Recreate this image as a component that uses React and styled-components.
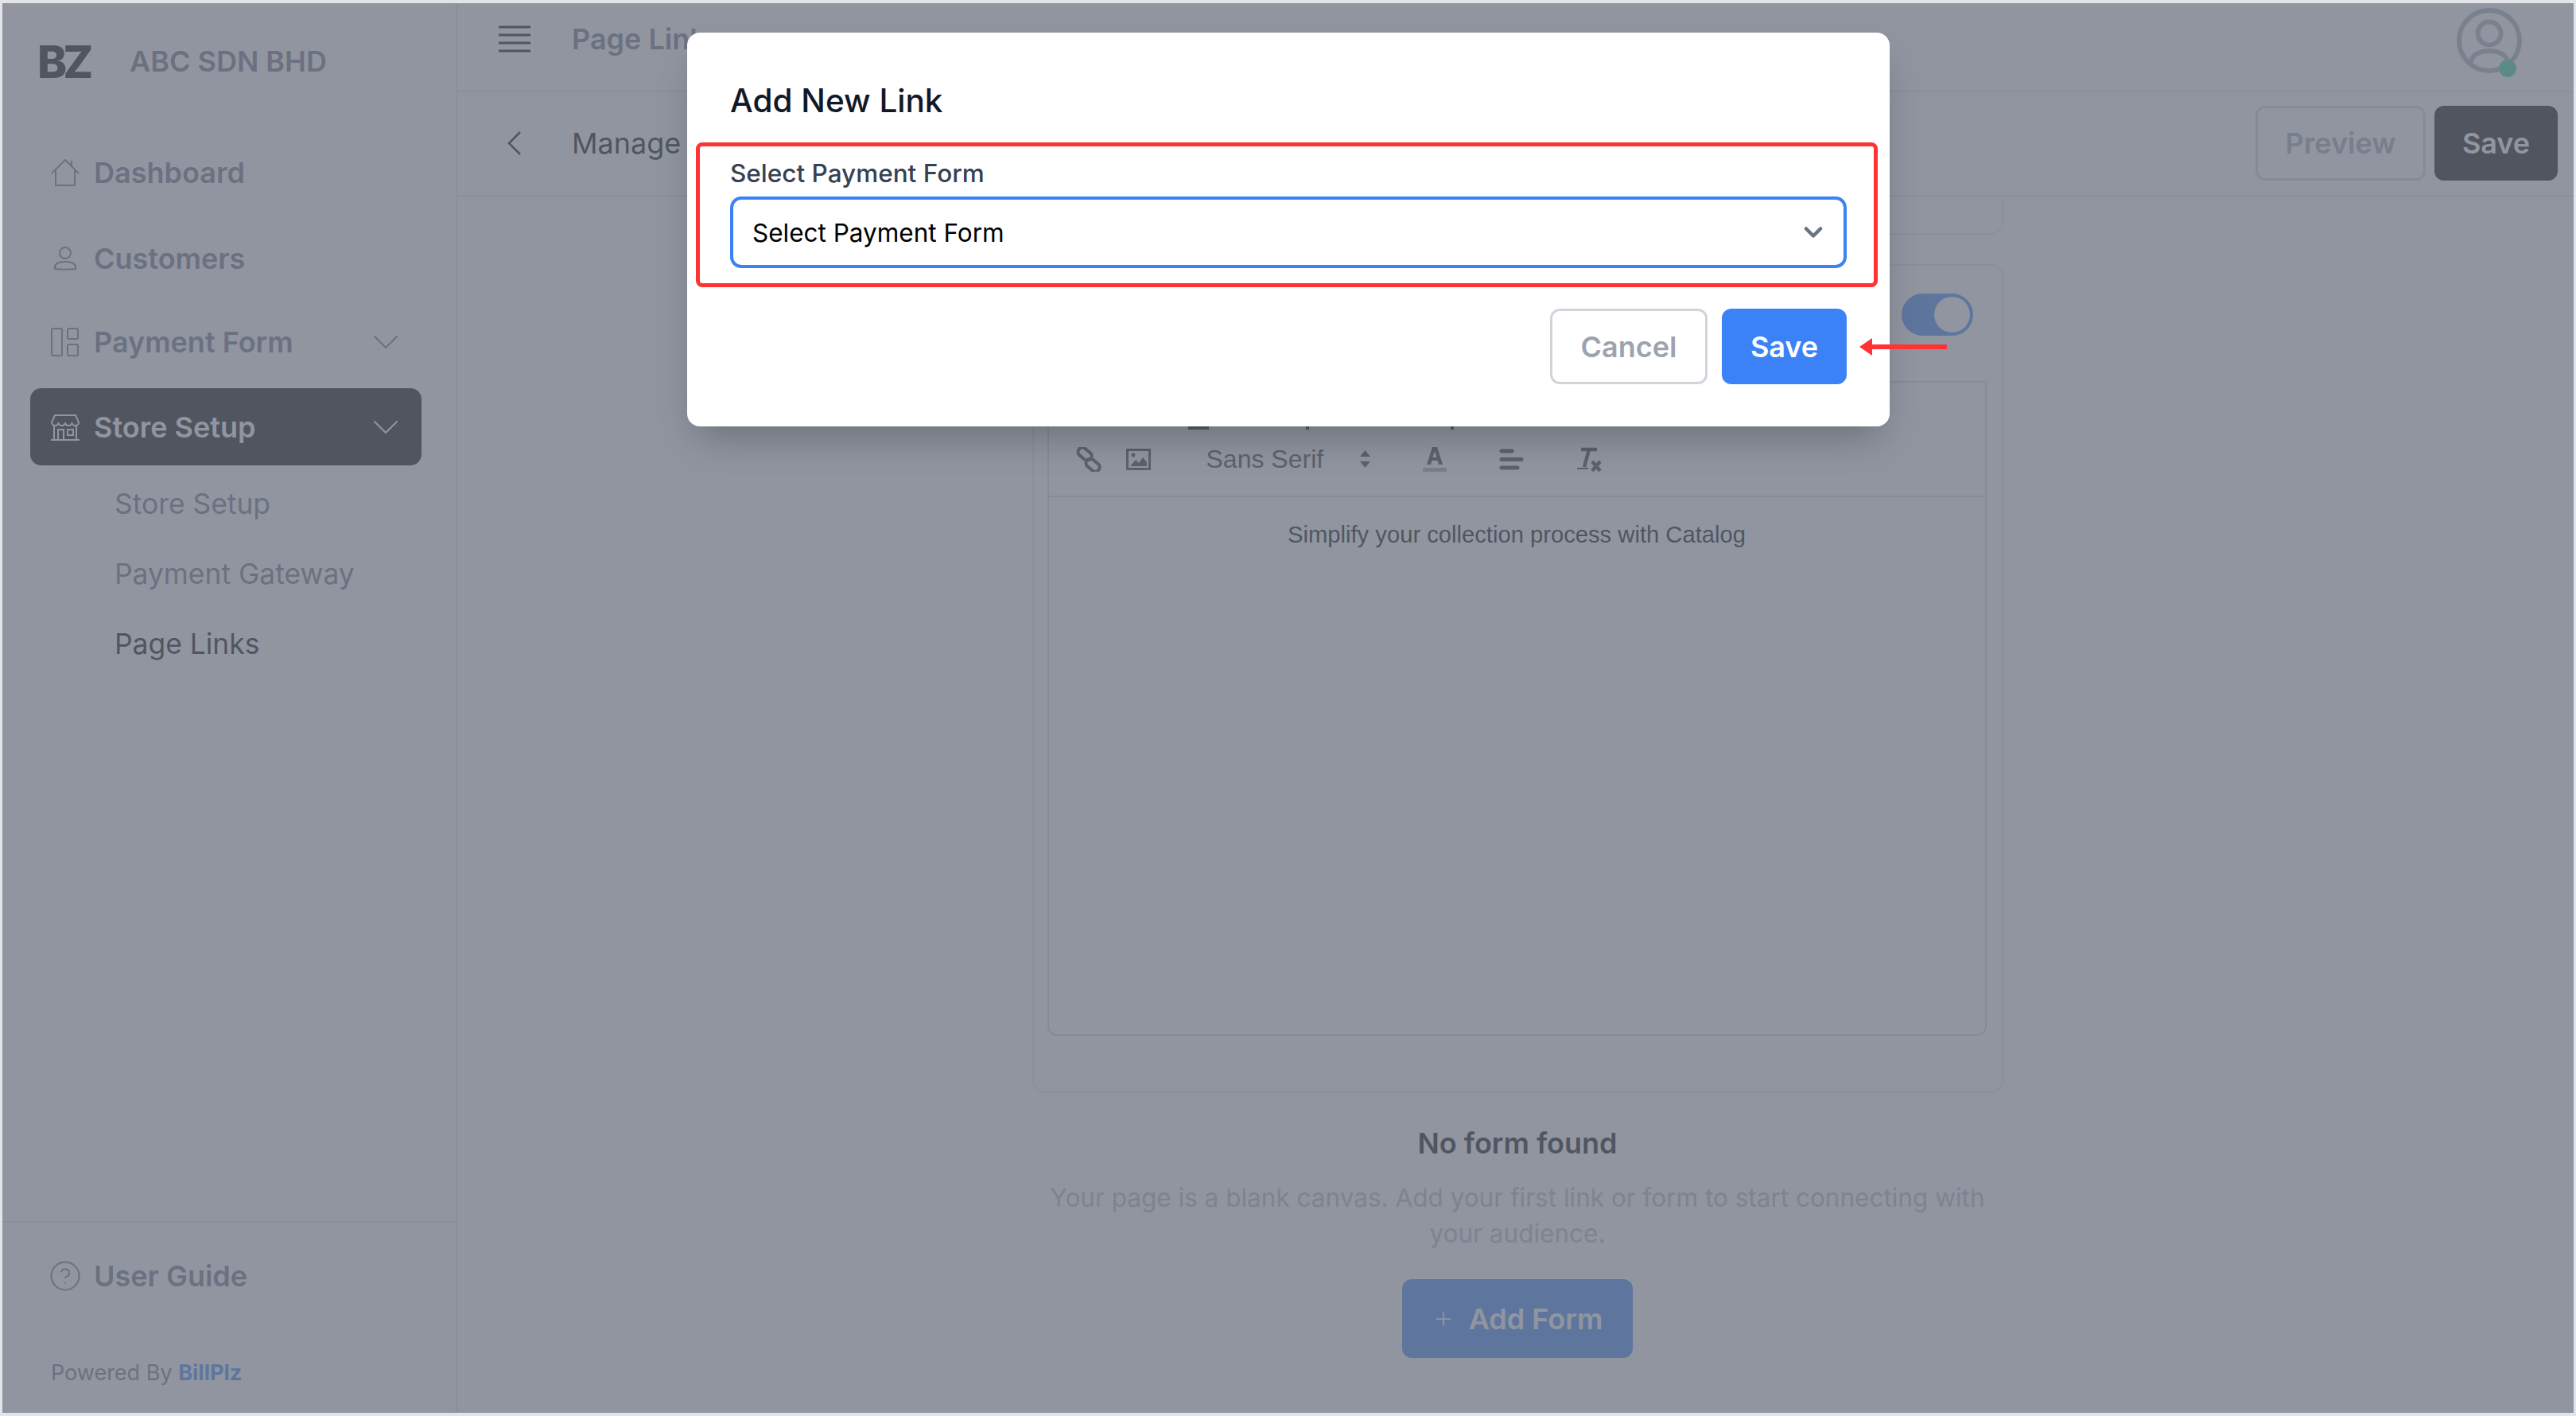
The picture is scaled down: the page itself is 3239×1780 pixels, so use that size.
import React from 'react'
import styled, { createGlobalStyle } from 'styled-components'
import { ChevronDown, Plus, CircleHelp } from 'lucide-react'

const GlobalStyle = createGlobalStyle`
  html, body {
    margin: 0;
    padding: 0;
    background: #e5e7eb;
    font-family: Inter, "Liberation Sans", sans-serif;
  }
  * {
    box-sizing: border-box;
  }
`

const Frame = styled.div`
  position: relative;
  width: 3239px;
  height: 1780px;
  border: 3px solid #e3e4e8;
  border-top-width: 4px;
  border-bottom-width: 4px;
  background: #ffffff;
  display: flex;
  overflow: hidden;
`

const Sidebar = styled.aside`
  width: 572px;
  flex: none;
  border-right: 2px solid #e5e7eb;
  display: flex;
  flex-direction: column;
`

const Brand = styled.div`
  height: 148px;
  padding: 0 0 0 44px;
  display: flex;
  align-items: center;
  gap: 52px;
`

const BrandMark = styled.span`
  font-size: 56px;
  font-weight: 800;
  color: #000000;
  letter-spacing: -5px;
  width: 64px;
`

const BrandName = styled.span`
  font-size: 36px;
  font-weight: 600;
  color: #6b7280;
  margin-top: -2px;
`

const Nav = styled.nav`
  flex: 1;
  padding: 12px 43px 0 35px;
  display: flex;
  flex-direction: column;
`

const NavItem = styled.div`
  height: ${p => p.$h || 106}px;
  margin-bottom: ${p => p.$mb || 0}px;
  border-radius: 14px;
  padding: 0 17px 0 26px;
  display: flex;
  align-items: center;
  gap: 18px;
  font-size: 36px;
  font-weight: 600;
  color: ${p => (p.$active ? '#ffffff' : '#6b7280')};
  background: ${p => (p.$active ? '#000000' : 'transparent')};
  svg {
    flex: none;
  }
`

const NavLabel = styled.span`
  flex: 1;
`

const SubItem = styled.div`
  height: 88px;
  padding-left: 106px;
  display: flex;
  align-items: center;
  font-size: 35.4px;
  color: ${p => (p.$active ? '#000000' : '#6b7280')};
`

const SideFooter = styled.div`
  border-top: 2px solid #e5e7eb;
  height: 241px;
  padding: 0 58px;
  display: flex;
  flex-direction: column;
`

const GuideRow = styled.div`
  height: 134px;
  display: flex;
  align-items: center;
  gap: 15px;
  font-size: 36px;
  font-weight: 600;
  color: #6b7280;
`

const Powered = styled.div`
  margin-top: 38px;
  margin-left: 3px;
  font-size: 27px;
  color: #6b7280;
  b {
    color: #3b82f6;
    font-weight: 700;
  }
`

const Main = styled.main`
  flex: 1;
  min-width: 0;
  display: flex;
  flex-direction: column;
`

const Header = styled.header`
  height: 112px;
  flex: none;
  border-bottom: 2px solid #e5e7eb;
  padding: 0 63px 20px 52px;
  display: flex;
  align-items: center;
`

const PageTitle = styled.h1`
  margin: 0 0 0 52px;
  flex: 1;
  font-size: 36px;
  font-weight: 600;
  color: #6b7280;
`

const AvatarSlot = styled.div`
  align-self: flex-start;
  margin-top: 6px;
  display: flex;
`

const SubHeader = styled.div`
  height: 131px;
  flex: none;
  border-bottom: 2px solid #e5e7eb;
  padding: 0 20px 2px 63px;
  display: flex;
  align-items: center;
  gap: 11px;
`

const SubTitle = styled.span`
  margin-left: 52px;
  flex: 1;
  font-size: 36px;
  color: #000000;
`

const TopButton = styled.button`
  height: 94px;
  width: ${p => p.$w}px;
  border-radius: 12px;
  font: 600 36px Inter, sans-serif;
  border: ${p => (p.$dark ? '0' : '3px solid #d1d5db')};
  background: ${p => (p.$dark ? '#000000' : '#ffffff')};
  color: ${p => (p.$dark ? '#ffffff' : '#9ca3af')};
`

const Content = styled.div`
  flex: 1;
  overflow: hidden;
  display: flex;
  flex-direction: column;
  align-items: center;
  padding-left: 5px;
`

const Column = styled.div`
  width: 1221px;
`

const StubCard = styled.div`
  height: 48px;
  border: 2px solid #e5e7eb;
  border-top: 0;
  border-radius: 0 0 16px 16px;
`

const EditorCard = styled.section`
  margin-top: 37px;
  height: 1042px;
  border: 2px solid #e5e7eb;
  border-radius: 16px;
  padding: 0 19px 0 17px;
`

const ToggleRow = styled.div`
  height: 145px;
  padding: 35px 17px 0 0;
  display: flex;
  justify-content: flex-end;
  align-items: flex-start;
`

const Toggle = styled.div`
  width: 90px;
  height: 53px;
  border-radius: 27px;
  background: #3b82f6;
  padding: 4px;
  display: flex;
  justify-content: flex-end;
`

const Knob = styled.div`
  width: 45px;
  height: 45px;
  border-radius: 50%;
  background: #ffffff;
`

const Toolbar = styled.div`
  height: 146px;
  border: 2px solid #d1d5db;
  display: flex;
  flex-direction: column;
  justify-content: flex-end;
`

const ToolRow = styled.div`
  height: 50px;
  margin-bottom: 21px;
  padding-left: 34px;
  display: flex;
  align-items: center;
`

const HiddenRow = styled.div`
  height: 4px;
  margin-bottom: 12px;
  padding-left: 175px;
  display: flex;
`

const HiddenMark = styled.span`
  width: ${p => p.$w}px;
  height: 4px;
  margin-left: ${p => p.$ml || 0}px;
  background: #222222;
`

const FontPick = styled.span`
  margin-left: 70px;
  font: 32px "Liberation Sans", Arial, sans-serif;
  color: #333333;
  width: 172px;
`

const ToolGap = styled.span`
  display: inline-flex;
  margin-left: ${p => p.$ml}px;
`

const EditorBody = styled.div`
  height: 677px;
  border: 2px solid #d1d5db;
  border-top: 0;
  border-radius: 0 0 12px 12px;
  padding-top: 31px;
  text-align: center;
  font: 29.2px "Liberation Sans", Arial, sans-serif;
  color: #000000;
`

const Empty = styled.div`
  margin-top: 41px;
  text-align: center;
`

const EmptyTitle = styled.h2`
  margin: 0;
  font-size: 36px;
  line-height: 44px;
  font-weight: 600;
  color: #000000;
`

const EmptyText = styled.p`
  margin: 24px 0 0;
  font-size: 31.5px;
  line-height: 45px;
  color: #b4b8c0;
`

const AddButton = styled.button`
  margin-top: 35px;
  width: 290px;
  height: 99px;
  border: 0;
  border-radius: 12px;
  background: #3b82f6;
  color: #ffffff;
  font: 600 36px Inter, sans-serif;
  display: inline-flex;
  align-items: center;
  justify-content: center;
  gap: 18px;
`

const Overlay = styled.div`
  position: absolute;
  inset: 0;
  background: rgba(107, 114, 128, 0.75);
  display: flex;
  justify-content: center;
  align-items: flex-start;
  padding: 37px 0 0 1px;
`

const Modal = styled.div`
  position: relative;
  width: 1512px;
  height: 495px;
  background: #ffffff;
  border-radius: 16px;
  box-shadow: 0 25px 50px -12px rgba(0, 0, 0, 0.25);
  padding: 0 54px;
  display: flex;
  flex-direction: column;
`

const ModalTitle = styled.h3`
  margin: 56px 0 0;
  font-size: 40.5px;
  line-height: 60px;
  font-weight: 500;
  color: #111827;
`

const Field = styled.div`
  position: relative;
  margin-top: 41px;
`

const Highlight = styled.div`
  position: absolute;
  top: -19px;
  bottom: -24px;
  left: -43px;
  right: -39px;
  border: 5px solid #ff3333;
  border-radius: 8px;
  pointer-events: none;
`

const FieldLabel = styled.label`
  display: block;
  font-size: 31.5px;
  line-height: 40px;
  font-weight: 500;
  color: #374151;
`

const SelectBox = styled.div`
  margin-top: 9px;
  height: 90px;
  border: 4px solid #3b82f6;
  border-radius: 14px;
  padding: 0 20px 0 24px;
  display: flex;
  align-items: center;
  justify-content: space-between;
  font-size: 31.5px;
  font-weight: 400;
  color: #000000;
`

const Actions = styled.div`
  margin-top: 51px;
  display: flex;
  justify-content: flex-end;
  gap: 18px;
`

const ModalButton = styled.button`
  height: 95px;
  width: ${p => p.$w}px;
  border-radius: 12px;
  font: 600 36px Inter, sans-serif;
  border: ${p => (p.$primary ? '0' : '3px solid #d1d5db')};
  background: ${p => (p.$primary ? '#3b82f6' : '#ffffff')};
  color: ${p => (p.$primary ? '#ffffff' : '#9ca3af')};
`

const Arrow = styled.svg`
  position: absolute;
  left: 1474px;
  top: 383px;
`

const AvatarIcon = () => (
  <svg width="84" height="90" viewBox="0 0 84 90" fill="none" stroke="#a8adb8" strokeWidth="6">
    <circle cx="41" cy="41" r="38" />
    <circle cx="41" cy="32" r="14.500" />
    <path d="M17 70c2-11 12-16 24-16s22 5 24 16" />
    <circle cx="64" cy="76" r="11" fill="#34d399" stroke="none" />
  </svg>
)

const BurgerIcon = () => (
  <svg width="40" height="34" viewBox="0 0 40 34" stroke="#000" strokeWidth="3">
    <path d="M0 2h40M0 12h40M0 22h40M0 32h40" />
  </svg>
)

const BackIcon = () => (
  <svg width="18" height="30" viewBox="0 0 18 30" fill="none" stroke="#000" strokeWidth="2.500">
    <path d="M16 1L2 15l14 14" />
  </svg>
)

const HomeIcon = () => (
  <svg width="36" height="36" viewBox="0 0 36 36" fill="none" stroke="#6b7280" strokeWidth="2" strokeLinejoin="round">
    <path d="M1 19L18 2l17 17M6 15v19h24V15M26 3v8" />
  </svg>
)

const PersonIcon = () => (
  <svg width="36" height="30" viewBox="0 0 36 30" fill="none" stroke="#6b7280" strokeWidth="2">
    <circle cx="18" cy="8" r="7" />
    <path d="M5 28v-2c0-5 6-7 13-7s13 2 13 7v2c-8 1-18 1-26 0z" />
  </svg>
)

const PanelsIcon = () => (
  <svg width="36" height="36" viewBox="0 0 36 36" fill="none" stroke="#6b7280" strokeWidth="2">
    <rect x="1" y="1" width="13" height="34" rx="1.500" />
    <rect x="21" y="1" width="13" height="13" rx="1.500" />
    <rect x="21" y="21" width="13" height="14" rx="1.500" />
  </svg>
)

const StoreIcon = () => (
  <svg width="36" height="34" viewBox="0 0 36 34" fill="none" stroke="#ffffff" strokeWidth="2">
    <path d="M5 2h26l4 9c0 3-3 4-4.500 4s-4-1-4-4c0 3-2.500 4-4.300 4S18 14 18 11c0 3-2.500 4-4.200 4S9.500 14 9.500 11c0 3-2.500 4-4 4S1 14 1 11z" />
    <path d="M4 15v18M32 15v18M0 33h36" />
    <path d="M9 33V20h7v13M21 20h7v7h-7z" />
  </svg>
)

const LinkIcon = () => (
  <svg width="33" height="31" viewBox="0 0 33 31" fill="none" stroke="#333" strokeWidth="4">
    <rect x="2" y="3" width="19" height="11" rx="5.500" transform="rotate(40 11 8)" />
    <rect x="12" y="17" width="19" height="11" rx="5.500" transform="rotate(40 21 22)" />
  </svg>
)

const ImageIcon = () => (
  <svg width="31" height="27" viewBox="0 0 31 27">
    <rect x="1.500" y="1.500" width="28" height="24" fill="none" stroke="#333" strokeWidth="3" />
    <path d="M5 22l7-8 4 4 5-7 5 6v5z" fill="#333" />
    <circle cx="9" cy="8" r="2.500" fill="#333" />
  </svg>
)

const UpDownIcon = () => (
  <svg width="13" height="22" viewBox="0 0 13 22" fill="#333">
    <path d="M6.500 0L13 8H0zM6.500 22L0 14h13z" />
  </svg>
)

const ColorIcon = () => (
  <svg width="30" height="31" viewBox="0 0 30 31">
    <path d="M5 22L12 0h6l7 22h-5l-1.500-5h-7L10 22zM12.500 13h5L15 5z" fill="#333" />
    <rect x="0" y="26" width="30" height="5" rx="1.500" fill="#9ca3af" />
  </svg>
)

const AlignIcon = () => (
  <svg width="31" height="27" viewBox="0 0 31 27" stroke="#333" strokeWidth="5" strokeLinecap="round">
    <path d="M3 3h13M3 13.500h25M3 24h20" />
  </svg>
)

const ClearIcon = () => (
  <svg width="32" height="31" viewBox="0 0 32 31" fill="none" stroke="#333">
    <path d="M5 3h20" strokeWidth="4.500" />
    <path d="M15 3L9 25" strokeWidth="4.500" />
    <path d="M0 27h14" strokeWidth="2" />
    <path d="M19 18l10 12M29 18L19 30" strokeWidth="4.500" />
  </svg>
)

export default function App() {
  return (
    <Frame>
      <GlobalStyle />
      <Sidebar>
        <Brand>
          <BrandMark>BZ</BrandMark>
          <BrandName>ABC SDN BHD</BrandName>
        </Brand>
        <Nav>
          <NavItem $mb={2}>
            <HomeIcon />
            <NavLabel>Dashboard</NavLabel>
          </NavItem>
          <NavItem>
            <PersonIcon />
            <NavLabel>Customers</NavLabel>
          </NavItem>
          <NavItem $h={104} $mb={6}>
            <PanelsIcon />
            <NavLabel>Payment Form</NavLabel>
            <ChevronDown size={56} strokeWidth={0.9} />
          </NavItem>
          <NavItem $active $h={97} $mb={4}>
            <StoreIcon />
            <NavLabel>Store Setup</NavLabel>
            <ChevronDown size={56} strokeWidth={0.9} />
          </NavItem>
          <SubItem>Store Setup</SubItem>
          <SubItem>Payment Gateway</SubItem>
          <SubItem $active>Page Links</SubItem>
        </Nav>
        <SideFooter>
          <GuideRow>
            <CircleHelp size={42} strokeWidth={1.200} />
            User Guide
          </GuideRow>
          <Powered>
            Powered By <b>BillPlz</b>
          </Powered>
        </SideFooter>
      </Sidebar>
      <Main>
        <Header>
          <BurgerIcon />
          <PageTitle>Page Links</PageTitle>
          <AvatarSlot>
            <AvatarIcon />
          </AvatarSlot>
        </Header>
        <SubHeader>
          <BackIcon />
          <SubTitle>Manage Page Links</SubTitle>
          <TopButton $w={214}>Preview</TopButton>
          <TopButton $w={155} $dark>
            Save
          </TopButton>
        </SubHeader>
        <Content>
          <Column>
            <StubCard />
            <EditorCard>
              <ToggleRow>
                <Toggle>
                  <Knob />
                </Toggle>
              </ToggleRow>
              <Toolbar>
                <HiddenRow>
                  <HiddenMark $w={26} />
                  <HiddenMark $w={4} $ml={122} />
                  <HiddenMark $w={4} $ml={178} />
                </HiddenRow>
                <ToolRow>
                  <LinkIcon />
                  <ToolGap $ml={30}>
                    <ImageIcon />
                  </ToolGap>
                  <FontPick>Sans Serif</FontPick>
                  <ToolGap $ml={21}>
                    <UpDownIcon />
                  </ToolGap>
                  <ToolGap $ml={66}>
                    <ColorIcon />
                  </ToolGap>
                  <ToolGap $ml={66}>
                    <AlignIcon />
                  </ToolGap>
                  <ToolGap $ml={67}>
                    <ClearIcon />
                  </ToolGap>
                </ToolRow>
              </Toolbar>
              <EditorBody>Simplify your collection process with Catalog</EditorBody>
            </EditorCard>
            <Empty>
              <EmptyTitle>No form found</EmptyTitle>
              <EmptyText>
                Your page is a blank canvas. Add your first link or form to start connecting with your audience.
              </EmptyText>
              <AddButton>
                <Plus size={28} strokeWidth={1.500} />
                Add Form
              </AddButton>
            </Empty>
          </Column>
        </Content>
      </Main>
      <Overlay>
        <Modal>
          <ModalTitle>Add New Link</ModalTitle>
          <Field>
            <FieldLabel>Select Payment Form</FieldLabel>
            <SelectBox>
              Select Payment Form
              <ChevronDown size={36} strokeWidth={3} color="#6b7280" />
            </SelectBox>
            <Highlight />
          </Field>
          <Actions>
            <ModalButton $w={198}>Cancel</ModalButton>
            <ModalButton $w={157} $primary>
              Save
            </ModalButton>
          </Actions>
          <Arrow width="110" height="24" viewBox="0 0 110 24">
            <path d="M0 12L16 1v8h94v6H16v8z" fill="#ff3333" />
          </Arrow>
        </Modal>
      </Overlay>
    </Frame>
  )
}
